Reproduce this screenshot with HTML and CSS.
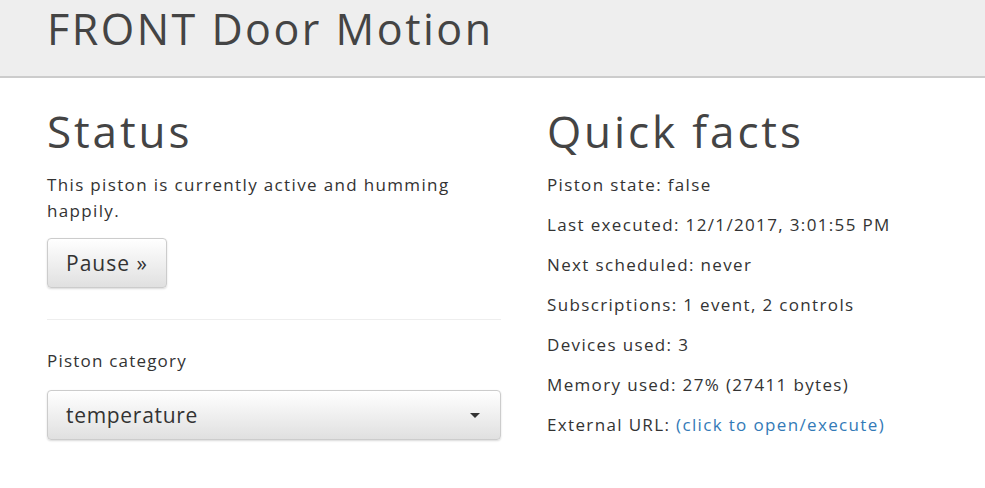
FILE: index.html
```html
<!DOCTYPE html>
<html lang="en">
<head>
    <meta charset="UTF-8">
    <meta name="viewport" content="width=device-width, initial-scale=1.0">
    <title>FRONT Door Motion</title>
    <link rel="stylesheet" href="styles.css">
</head>
<body>
    <div class="header">
        <h1 class="title">FRONT Door Motion</h1>
    </div>
    <div class="container">
        <div class="column left">
            <h2>Status</h2>
            <p>This piston is currently active and humming happily.</p>
            <button class="btn">Pause &raquo;</button>
            <hr>
            <label class="field-label">Piston category</label>
            <div class="select">
                <span>temperature</span>
                <span class="caret"></span>
            </div>
        </div>
        <div class="column right">
            <h2>Quick facts</h2>
            <p class="fact">Piston state: false</p>
            <p class="fact">Last executed: 12/1/2017, 3:01:55 PM</p>
            <p class="fact">Next scheduled: never</p>
            <p class="fact">Subscriptions: 1 event, 2 controls</p>
            <p class="fact">Devices used: 3</p>
            <p class="fact">Memory used: 27% (27411 bytes)</p>
            <p class="fact">External URL: <a href="#">(click to open/execute)</a></p>
        </div>
    </div>
</body>
</html>
```

FILE: styles.css
```css
body {
    font-family: "Open Sans", "DejaVu Sans", sans-serif;
    font-size: 17px;
    line-height: 26px;
    letter-spacing: 1.35px;
    color: #333;
    margin: 0;
    padding: 0;
    background: #fff;
}
.header {
    background: #eee;
    border-bottom: 2px solid #ccc;
    height: 78px;
    padding: 0 47px;
    box-sizing: border-box;
}
.title {
    margin: 0;
    font-size: 43px;
    font-weight: normal;
    line-height: 58px;
    letter-spacing: 2.5px;
    color: #444;
}
.container {
    display: flex;
    gap: 46px;
    padding: 0 47px;
}
.left {
    flex: 0 0 454px;
}
.right {
    flex: 1;
}
h2 {
    font-size: 44px;
    font-weight: normal;
    line-height: 56px;
    letter-spacing: 2.9px;
    color: #444;
    margin: 25px 0 13px;
}
p {
    margin: 0 0 14px;
}
.fact {
    margin: 0 0 14px;
}
a {
    color: #337ab7;
    text-decoration: none;
}
.btn {
    font-family: inherit;
    font-size: 21px;
    letter-spacing: 1px;
    color: #333;
    padding: 0 18px;
    height: 50px;
    border: 1px solid #ccc;
    border-radius: 4px;
    background: linear-gradient(to bottom, #fff 0%, #e0e0e0 100%);
    box-shadow: 0 1px 2px rgba(0, 0, 0, 0.15);
}
hr {
    border: 0;
    border-top: 1px solid #eee;
    margin: 31px 0 28px;
}
.field-label {
    display: block;
    margin-bottom: 16px;
    letter-spacing: 1.2px;
}
.select {
    display: flex;
    align-items: center;
    justify-content: space-between;
    height: 50px;
    box-sizing: border-box;
    padding: 0 18px;
    font-size: 21px;
    letter-spacing: 0.7px;
    border: 1px solid #ccc;
    border-radius: 4px;
    background: linear-gradient(to bottom, #fff 0%, #e0e0e0 100%);
    box-shadow: 0 1px 2px rgba(0, 0, 0, 0.15);
}
.caret {
    width: 0;
    height: 0;
    border-left: 5px solid transparent;
    border-right: 5px solid transparent;
    border-top: 5px solid #333;
    margin-right: 2px;
}
```
